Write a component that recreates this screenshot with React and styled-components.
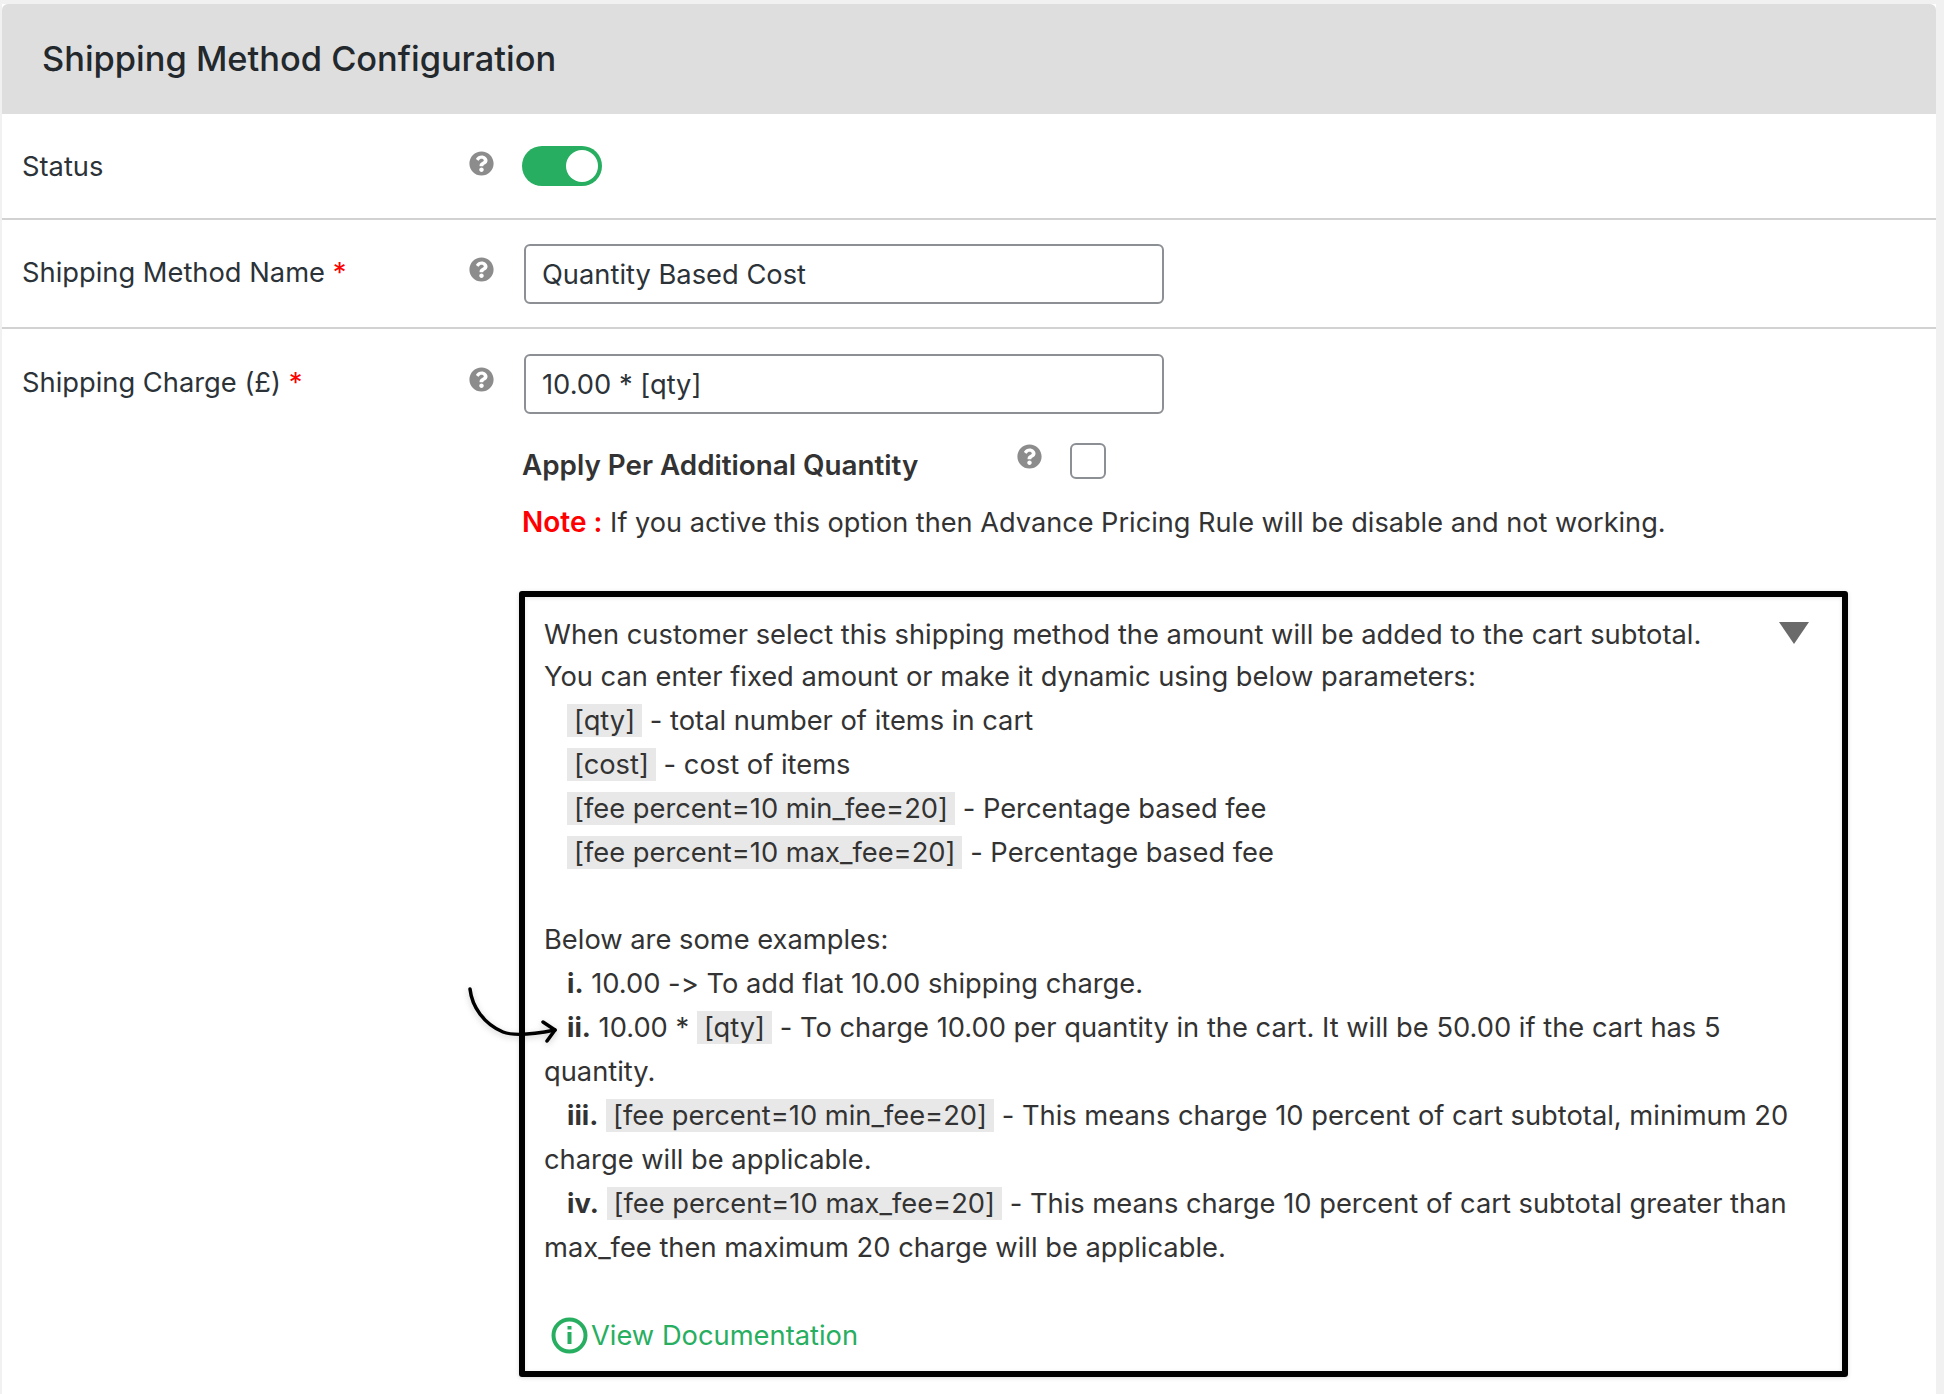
import React from "react"
import styled, { createGlobalStyle } from "styled-components"
import { FaQuestionCircle } from "react-icons/fa"

const GlobalStyle = createGlobalStyle`
  html, body {
    margin: 0;
    padding: 0;
    background: #f1f1f1;
    overflow: hidden;
  }
  body {
    font-family: Inter, "Liberation Sans", sans-serif;
    font-feature-settings: "calt" 0;
    color: #2c3338;
  }
`

const Panel = styled.section`
  box-sizing: border-box;
  width: 1934px;
  height: 1390px;
  margin: 4px 0 0 2px;
  background: #fff;
  overflow: hidden;
`

const Header = styled.header`
  box-sizing: border-box;
  height: 110px;
  padding: 0 0 2px 40px;
  display: flex;
  align-items: center;
  background: #dedede;
  border-radius: 6px 6px 0 0;
`

const Title = styled.h2`
  margin: 0;
  font-size: 34.4px;
  font-weight: 500;
  color: #23282d;
`

const Row = styled.div`
  display: grid;
  grid-template-columns: 447px 53px 1fr;
  padding: ${p => p.$pad};
  padding-left: 20px;
  border-bottom: ${p => (p.$last ? "none" : "2px solid #d2d2d2")};
`

const Label = styled.label`
  font-size: 27.3px;
  line-height: 32px;
  margin-top: ${p => p.$top}px;
`

const Required = styled.span`
  color: #f00;
`

const Help = styled(FaQuestionCircle)`
  display: block;
  width: 25px;
  height: 25px;
  color: #8c8c8c;
  margin-top: ${p => p.$top}px;
`

const Toggle = styled.span`
  box-sizing: border-box;
  display: flex;
  justify-content: flex-end;
  align-items: center;
  width: 80px;
  height: 40px;
  padding-right: 4px;
  border-radius: 20px;
  background: #27ae60;
`

const Knob = styled.span`
  width: 32px;
  height: 32px;
  border-radius: 50%;
  background: #fff;
`

const TextInput = styled.input`
  display: block;
  box-sizing: border-box;
  width: 640px;
  height: 60px;
  margin-left: 2px;
  padding: 0 16px;
  border: 2px solid #8c8f94;
  border-radius: 6px;
  background: #fff;
  font-family: inherit;
  font-feature-settings: inherit;
  font-size: 27.3px;
  color: #2c3338;
`

const Options = styled.div`
  display: flex;
  flex-direction: column;
`

const ApplyRow = styled.div`
  display: flex;
  align-items: flex-start;
  margin-top: 29px;
`

const ApplyLabel = styled.strong`
  width: 495px;
  margin-top: 5px;
  font-size: 27.8px;
  line-height: 34px;
  font-weight: 600;
  color: #333;
`

const SmallHelp = styled(FaQuestionCircle)`
  width: 25px;
  height: 25px;
  color: #8c8c8c;
  margin-top: 1px;
`

const Checkbox = styled.span`
  box-sizing: border-box;
  width: 36px;
  height: 36px;
  margin-left: 28px;
  border: 2px solid #8c8f94;
  border-radius: 6px;
  background: #fff;
`

const Note = styled.p`
  margin: 20px 0 0;
  font-size: 27.15px;
  line-height: 40px;
  color: #333;
`

const NoteTag = styled.b`
  color: #f00;
  font-size: 28px;
  font-weight: 600;
`

const DocBox = styled.div`
  position: relative;
  box-sizing: border-box;
  width: 1329px;
  height: 786px;
  margin: 48px 0 0 -3px;
  padding: 17px 30px 0 19px;
  border: 6px solid #000;
  border-radius: 3px;
  box-shadow: 0 1px 4px rgba(0, 0, 0, 0.15), inset 0 1px 4px rgba(0, 0, 0, 0.1);
  font-size: 27.3px;
  line-height: 43.9px;
  color: #333;
`

const Caret = styled.span`
  position: absolute;
  top: 25px;
  right: 33px;
  width: 0;
  height: 0;
  border-left: 15px solid transparent;
  border-right: 15px solid transparent;
  border-top: 22px solid #6a6a6a;
`

const Line = styled.div`
  min-height: ${p => (p.$short ? "41px" : "43.9px")};
  line-height: ${p => (p.$short ? "41px" : "43.9px")};
  padding-left: ${p => (p.$indent ? "23px" : "0")};
  text-indent: ${p => (p.$hang ? "23px" : "0")};
`

const Code = styled.code`
  font-family: inherit;
  background: #e8e8e8;
  padding: 0 7px;
`

const DocLink = styled.a`
  display: inline-flex;
  align-items: center;
  gap: 3px;
  margin-left: 7px;
  color: #27ae60;
  text-decoration: none;
`

const ArrowMark = styled.svg`
  position: absolute;
  left: -60px;
  top: 387px;
  overflow: visible;
  pointer-events: none;
  filter: drop-shadow(0 2px 3px rgba(0, 0, 0, 0.2));
`

const InfoIcon = () => (
  <svg width="37" height="37" viewBox="0 0 37 37" fill="none" stroke="#27ae60" strokeWidth="4">
    <circle cx="18.5" cy="18.5" r="16" />
    <line x1="18.5" y1="15" x2="18.5" y2="27" />
    <line x1="18.5" y1="9" x2="18.5" y2="12.5" />
  </svg>
)

const App = () => (
  <>
    <GlobalStyle />
    <Panel>
      <Header>
        <Title>Shipping Method Configuration</Title>
      </Header>

      <Row $pad="32px 0 32px">
        <Label $top={5}>Status</Label>
        <Help $top={5} />
        <Toggle>
          <Knob />
        </Toggle>
      </Row>

      <Row $pad="24px 0 23px">
        <Label $top={13}>
          Shipping Method Name <Required>*</Required>
        </Label>
        <Help $top={13} />
        <TextInput defaultValue="Quantity Based Cost" />
      </Row>

      <Row $pad="25px 0 0" $last>
        <Label $top={13}>
          Shipping Charge (£) <Required>*</Required>
        </Label>
        <Help $top={13} />
        <Options>
          <TextInput defaultValue="10.00 * [qty]" />
          <ApplyRow>
            <ApplyLabel>Apply Per Additional Quantity</ApplyLabel>
            <SmallHelp />
            <Checkbox />
          </ApplyRow>
          <Note>
            <NoteTag>Note :</NoteTag> If you active this option then Advance Pricing Rule will be disable and not working.
          </Note>

          <DocBox>
            <Caret />
            <ArrowMark width="90" height="60" viewBox="0 0 90 60" fill="none" stroke="#000" strokeWidth="3.5" strokeLinecap="round" strokeLinejoin="round">
              <path d="M5 5 C7 23 19 40 38 48 C48 52 70 50 90 46" />
              <path d="M78 38 L90 46 L82 57" />
            </ArrowMark>
            <Line $short>When customer select this shipping method the amount will be added to the cart subtotal.</Line>
            <Line>You can enter fixed amount or make it dynamic using below parameters:</Line>
            <Line $indent><Code>[qty]</Code> - total number of items in cart</Line>
            <Line $indent><Code>[cost]</Code> - cost of items</Line>
            <Line $indent><Code>[fee percent=10 min_fee=20]</Code> - Percentage based fee</Line>
            <Line $indent><Code>[fee percent=10 max_fee=20]</Code> - Percentage based fee</Line>
            <Line />
            <Line>Below are some examples:</Line>
            <Line $indent><b>i.</b> 10.00 -&gt; To add flat 10.00 shipping charge.</Line>
            <Line $hang><b>ii.</b> 10.00 * <Code>[qty]</Code> - To charge 10.00 per quantity in the cart. It will be 50.00 if the cart has 5 quantity.</Line>
            <Line $hang><b>iii.</b> <Code>[fee percent=10 min_fee=20]</Code> - This means charge 10 percent of cart subtotal, minimum 20 charge will be applicable.</Line>
            <Line $hang><b>iv.</b> <Code>[fee percent=10 max_fee=20]</Code> - This means charge 10 percent of cart subtotal greater than max_fee then maximum 20 charge will be applicable.</Line>
            <Line />
            <DocLink href="#docs">
              <InfoIcon />
              View Documentation
            </DocLink>
          </DocBox>
        </Options>
      </Row>
    </Panel>
  </>
)

export default App
